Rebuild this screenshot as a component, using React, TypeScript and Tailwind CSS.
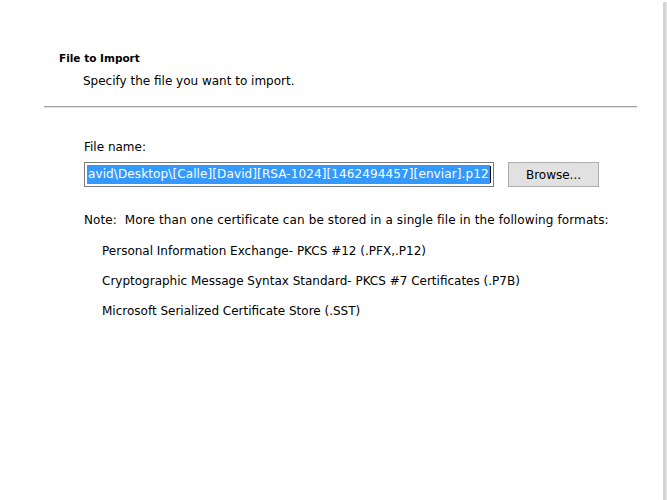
export default function App() {
  return (
    <div className="w-[667px] h-[500px] flex bg-white font-['DejaVu_Sans',Tahoma,sans-serif] text-[12px] text-black">
      <div className="flex-1 flex flex-col">
        <div className="pl-[59px] pt-[51px]">
          <h1 className="font-bold text-[10.5px] leading-[14px]">File to Import</h1>
          <p className="pl-[24px] mt-[9px] leading-[14px]">Specify the file you want to import.</p>
        </div>

        <div className="ml-[44px] mt-[18px] w-[593px] h-[2px] border-t border-[#a0a0a0] bg-[#e3e3e3]" />

        <div className="pl-[84px] pt-[32px]">
          <label className="block leading-[14px]">File name:</label>
          <div className="mt-[8px] flex items-center gap-[14px]">
            <div className="w-[410px] h-[25px] border border-[#7a7a7a] bg-white px-[2px] flex items-center overflow-hidden">
              <span className="bg-[#3399ff] text-white leading-[19px] whitespace-nowrap pl-[1px] pr-[1px] tracking-[0.11px]">
                avid\Desktop\[Calle][David][RSA-1024][1462494457][enviar].p12
              </span>
              <span className="w-[1px] h-[17px] bg-black" />
            </div>
            <button className="w-[91px] h-[25px] border border-[#adadad] bg-[#e1e1e1] leading-[14px]">
              Browse...
            </button>
          </div>

          <p className="mt-[26px] leading-[14px] whitespace-pre tracking-[0.11px]">Note:  More than one certificate can be stored in a single file in the following formats:</p>
          <ul className="pl-[18px] mt-[17px] flex flex-col gap-[16px] leading-[14px]">
            <li>Personal Information Exchange- PKCS #12 (.PFX,.P12)</li>
            <li>Cryptographic Message Syntax Standard- PKCS #7 Certificates (.P7B)</li>
            <li>Microsoft Serialized Certificate Store (.SST)</li>
          </ul>
        </div>
      </div>
      <div className="w-[4px] mt-[2px] bg-[#d4d4d4] border-r border-[#e8e8e8]" />
    </div>
  );
}
